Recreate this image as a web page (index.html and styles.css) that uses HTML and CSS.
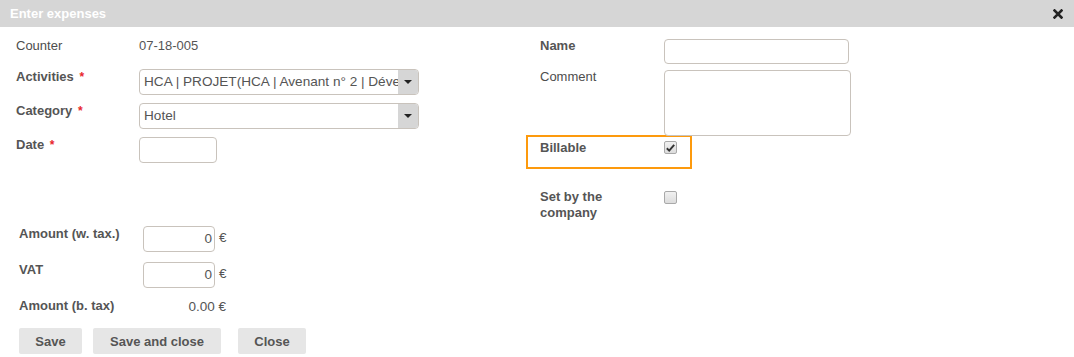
FILE: index.html
```html
<!DOCTYPE html>
<html lang="en">
<head>
<meta charset="utf-8">
<title>Enter expenses</title>
<link rel="stylesheet" href="styles.css">
</head>
<body>
<div class="dialog">
  <div class="titlebar">
    <span class="title">Enter expenses</span>
    <svg class="close" width="10" height="10" viewBox="0 0 10 10" aria-label="Close"><path d="M1.5 1.5 L8.5 8.5 M8.5 1.5 L1.5 8.5" stroke="#222" stroke-width="2.6" stroke-linecap="square"/></svg>
  </div>
  <div class="content">
    <div class="col-left">
      <div class="row row-counter">
        <span class="label plain">Counter</span>
        <span class="value">07-18-005</span>
      </div>
      <div class="row">
        <span class="label">Activities <span class="req">*</span></span>
        <div class="select">
          <span class="select-text">HCA | PROJET(HCA | Avenant n° 2 | Développement)</span>
          <span class="select-arrow"><span class="tri"></span></span>
        </div>
      </div>
      <div class="row">
        <span class="label">Category <span class="req">*</span></span>
        <div class="select">
          <span class="select-text">Hotel</span>
          <span class="select-arrow"><span class="tri"></span></span>
        </div>
      </div>
      <div class="row">
        <span class="label">Date <span class="req">*</span></span>
        <div class="input date"></div>
      </div>
      <div class="amounts">
        <div class="arow">
          <span class="label">Amount (w. tax.)</span>
          <div class="money"><div class="input num">0</div><span class="cur">€</span></div>
        </div>
        <div class="arow">
          <span class="label">VAT</span>
          <div class="money"><div class="input num">0</div><span class="cur">€</span></div>
        </div>
        <div class="arow total">
          <span class="label">Amount (b. tax)</span>
          <span class="total-value">0.00 €</span>
        </div>
      </div>
    </div>
    <div class="col-right">
      <div class="rrow name-row">
        <span class="label">Name</span>
        <div class="input name"></div>
      </div>
      <div class="rrow comment-row">
        <span class="label plain">Comment</span>
        <div class="input comment"></div>
      </div>
      <div class="rrow billable">
        <span class="label">Billable</span>
        <span class="check checked"><svg width="9" height="8" viewBox="0 0 9 8"><path d="M0.8 4.3 L3.2 6.6 L8.2 0.8" fill="none" stroke="#333" stroke-width="1.9"/></svg></span>
      </div>
      <div class="rrow company">
        <span class="label narrow">Set by the company</span>
        <span class="check"></span>
      </div>
    </div>
  </div>
  <div class="buttons">
    <button class="btn btn-save">Save</button>
    <button class="btn btn-saveclose">Save and close</button>
    <button class="btn btn-close">Close</button>
  </div>
</div>
</body>
</html>
```

FILE: styles.css
```css
* { box-sizing: border-box; }
html, body { margin: 0; padding: 0; background: #fff; }
body {
  font-family: "Liberation Sans", Arial, sans-serif;
  font-size: 13px;
  line-height: 16px;
  color: #555;
  width: 1074px;
  height: 357px;
  overflow: hidden;
}
.titlebar {
  height: 27px;
  background: #d6d6d6;
  display: flex;
  align-items: center;
  justify-content: space-between;
  padding: 0 11px 0 10px;
}
.title { color: #fff; font-weight: bold; font-size: 13px; }
.close { display: block; }

.content {
  display: grid;
  grid-template-columns: 526px 1fr;
  padding-top: 11px;
}
.col-left { padding-left: 16px; }
.label { font-weight: bold; color: #555; }
.label.plain { font-weight: normal; color: #4d4d4d; }
.req { color: #e8262c; font-weight: bold; margin-left: 2px; font-size: 12px; }

.row {
  display: grid;
  grid-template-columns: 123px auto;
  align-items: start;
  margin-bottom: 8px;
}
.row-counter { height: 16px; margin-bottom: 15px; }
.value { color: #555; }

.select {
  width: 280px;
  height: 26px;
  border: 1px solid #c9c3bc;
  border-radius: 4px;
  display: flex;
  overflow: hidden;
  background: #fff;
}
.select-text {
  flex: 1;
  min-width: 0;
  white-space: nowrap;
  overflow: hidden;
  padding-left: 4px;
  line-height: 24px;
  font-size: 13.6px;
  color: #555;
}
.select-arrow {
  width: 20px;
  flex: none;
  background: #d6d6d6;
  display: flex;
  align-items: center;
  justify-content: center;
}
.tri {
  width: 0; height: 0;
  border-left: 4px solid transparent;
  border-right: 4px solid transparent;
  border-top: 4px solid #222;
}
.input {
  border: 1px solid #c9c3bc;
  border-radius: 4px;
  background: #fff;
  height: 26px;
}
.date { width: 78px; }

.amounts { margin-top: 63px; padding-left: 3px; }
.arow {
  display: grid;
  grid-template-columns: 124px auto;
  align-items: start;
  margin-bottom: 10px;
}
.money { display: flex; align-items: center; }
.num {
  width: 72px;
  text-align: right;
  padding-right: 2px;
  line-height: 24px;
  font-size: 13.5px;
  color: #555;
}
.cur { margin-left: 4px; margin-top: -2px; font-size: 13.5px; }
.total { grid-template-columns: 124px 83px; margin-bottom: 13px; }
.total-value { text-align: right; padding-top: 1px; font-size: 13.5px; }

.col-right { padding-left: 14px; }
.rrow {
  display: grid;
  grid-template-columns: 124px auto;
  align-items: start;
}
.name-row .input { width: 185px; height: 25px; margin-top: 1px; }
.comment-row { margin-top: 5px; }
.comment-row .input { width: 187px; height: 66px; margin-top: 1px; }
.billable {
  width: 166px;
  margin: -1px 0 0 -14px;
  border: 2px solid #fd9a0d;
  padding: 3px 0 0 12px;
  height: 34px;
}
.company { margin-top: 20px; }
.narrow { width: 80px; }
.check {
  width: 13px;
  height: 13px;
  margin-top: 1px;
  border: 1px solid #a9a9a9;
  border-radius: 2px;
  background: linear-gradient(#f1f1f1, #dcdcdc);
  display: flex;
  align-items: center;
  justify-content: center;
}
.company .check { margin-top: 2px; }

.buttons {
  display: flex;
  padding-left: 19px;
}
.btn {
  height: 26px;
  border: none;
  border-radius: 2px;
  background: #e6e6e6;
  color: #555;
  font-family: "Liberation Sans", Arial, sans-serif;
  font-size: 13px;
  font-weight: bold;
  padding: 0;
}
.btn-save { width: 63px; }
.btn-saveclose { width: 128px; margin-left: 11px; }
.btn-close { width: 68px; margin-left: 17px; }
```
